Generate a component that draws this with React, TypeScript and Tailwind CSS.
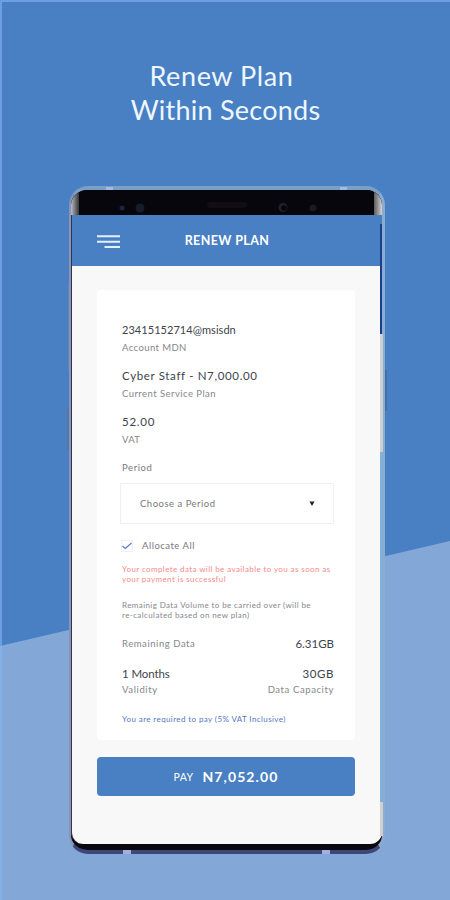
const details = [
  { value: "23415152714@msisdn", label: "Account MDN", valueClass: "text-[11px] tracking-[0.05px]", labelClass: "tracking-[0.4px]" },
  { value: "Cyber Staff - N7,000.00", label: "Current Service Plan", valueClass: "text-[11.5px] tracking-[0.65px]", labelClass: "tracking-[0.45px]" },
  { value: "52.00", label: "VAT", valueClass: "text-[11.5px] tracking-[0.75px]", labelClass: "tracking-[0.3px]" },
];

const MenuIcon = () => (
  <svg width="23" height="13" viewBox="0 0 23 13" stroke="#e4effb" strokeWidth="2">
    <path d="M0 1.2H23M0 6.7H23M7.5 12H23" />
  </svg>
);

const PhoneTop = () => (
  <div className="flex h-[25px] shrink-0 justify-between rounded-t-[12px] bg-[#07060c]">
    <div className="h-full w-[8px] rounded-tl-[12px] bg-gradient-to-r from-[#b9bdc4] to-[#38373b]" />
    <svg className="flex-1" height="25" viewBox="0 0 295 25" preserveAspectRatio="none">
      <circle cx="43" cy="18" r="2.5" fill="#182448" />
      <circle cx="61" cy="18" r="4.5" fill="#171c2c" />
      <rect x="128" y="12" width="40" height="6" rx="3" fill="#100e14" />
      <circle cx="204" cy="17.5" r="4.5" fill="#20212c" />
      <circle cx="205" cy="18" r="2.8" fill="#050508" />
      <circle cx="234" cy="18" r="3.5" fill="#1b1921" />
    </svg>
    <div className="h-full w-[8px] rounded-tr-[12px] bg-gradient-to-r from-[#5f5c5e] to-[#d4d4d1]" />
  </div>
);

const PlanCard = () => (
  <div className="h-[450px] rounded-[4px] bg-white pt-[31px] pr-[21px] pl-[25px] text-[#3d434c]">
    {details.map((item) => (
      <div key={item.label} className="mb-3 h-[34px]">
        <p className={`h-[17px] leading-[17px] whitespace-nowrap ${item.valueClass}`}>{item.value}</p>
        <p className={`h-[17px] pt-px text-[9.5px] leading-[17px] text-[#85878b] ${item.labelClass}`}>{item.label}</p>
      </div>
    ))}
    <p className="mt-[13px] text-[9.5px] leading-4 tracking-[0.6px] text-[#77797d]">Period</p>
    <div className="mt-[7px] -ml-[2px] flex h-[41px] w-[214px] items-center justify-between border border-[#f0f0f0] pr-[18px] pl-[19px]">
      <span className="pt-px text-[9.5px] tracking-[0.5px] text-[#77797d]">Choose a Period</span>
      <svg width="6" height="5" viewBox="0 0 6 5">
        <path d="M0.5 0.5H5.5L3 5Z" fill="#222" />
      </svg>
    </div>
    <div className="mt-4 -ml-px flex h-3 items-center gap-[9px]">
      <span className="flex h-3 w-3 items-center justify-center border border-[#edf0f8]">
        <svg width="10" height="8" viewBox="0 0 10 8" className="shrink-0" fill="none" stroke="#5d70d8" strokeWidth="1.1">
          <path d="M0.5 4L3.3 6.5L9.5 1" />
        </svg>
      </span>
      <span className="text-[9.5px] tracking-[0.5px] text-[#77797d]">Allocate All</span>
    </div>
    <p className="mt-3 text-[8px] leading-[10px] tracking-[0.4px] whitespace-nowrap text-[#f58b8b]">
      Your complete data will be available to you as soon as<br />your payment is successful
    </p>
    <p className="mt-4 text-[8px] leading-[10px] tracking-[0.4px] whitespace-nowrap text-[#85878b]">
      Remainig Data Volume to be carried over (will be<br />re-calculated based on new plan)
    </p>
    <div className="mt-4 flex h-4 items-center justify-between">
      <span className="text-[9.5px] tracking-[0.55px] text-[#85878b]">Remaining Data</span>
      <span className="text-[11.5px]">6.31GB</span>
    </div>
    <div className="mt-[14px] flex h-4 items-center justify-between text-[11.5px]">
      <span className="tracking-[-0.1px]">1 Months</span>
      <span className="tracking-[0.6px]">30GB</span>
    </div>
    <div className="flex h-4 items-center justify-between pt-px text-[9.5px] tracking-[0.6px] text-[#85878b]">
      <span>Validity</span>
      <span>Data Capacity</span>
    </div>
    <p className="mt-[13px] text-[8px] leading-4 tracking-[0.4px] text-[#5577bf]">You are required to pay (5% VAT Inclusive)</p>
  </div>
);

const Phone = () => (
  <div className="relative mx-auto mt-[59px] h-[668px] w-[316px]">
    {/* side keys */}
    <div className="absolute top-[98px] -left-px h-[86px] w-[2px] bg-[#6682ad]" />
    <div className="absolute top-[223px] -left-[2px] h-[41px] w-[3px] bg-[#56779f]" />
    <div className="absolute top-[184px] -right-[2px] h-[41px] w-[3px] bg-[#416fa9]" />

    <div className="relative flex h-full w-full flex-col overflow-hidden rounded-[19px] border-t-4 border-r-[3px] border-b-4 border-l-2 border-t-[#7ba0c5] border-r-[#8caad2] border-b-[#3f4779] border-l-[#8795b7] bg-[#0a0910]">
      <PhoneTop />
      <div className="flex h-[629px] shrink-0 flex-col overflow-hidden rounded-b-[12px] border-l border-[#34324e] bg-[#f8f8f8]">
        <div className="grid h-[51px] shrink-0 grid-cols-[60px_1fr_60px] items-center bg-[#4880c3] text-white">
          <div className="pt-px pl-[25px]">
            <MenuIcon />
          </div>
          <h2 className="pt-[2px] text-center text-[12.5px] font-bold tracking-[0.4px]">RENEW PLAN</h2>
        </div>
        <div className="pt-6 pr-[27px] pl-[25px]">
          <PlanCard />
          <button className="mt-[17px] flex h-[39px] w-full items-center justify-center gap-[9px] rounded-[4px] bg-[#4880c3] text-white">
            <span className="pt-[2px] text-[10.5px] tracking-[0.4px]">PAY</span>
            <span className="text-[14px] font-bold tracking-[1.1px]">N7,052.00</span>
          </button>
        </div>
      </div>
    </div>

    {/* right edge reflections and antenna bands */}
    <div className="absolute top-[38px] right-[3px] h-[110px] w-[2px] bg-[#173f8c]" />
    <div className="absolute top-[148px] right-[2px] h-[118px] w-[3px] bg-[#ccd0d0]" />
    <div className="absolute top-[266px] right-[3px] h-[350px] w-[2px] bg-[#7fb3db]" />
    <div className="absolute top-[616px] right-[2px] h-[34px] w-[3px] bg-[#d1d1cb]" />
    <div className="absolute top-[1px] left-[37px] h-[3px] w-[7px] bg-[#a3b8ee]" />
    <div className="absolute top-[1px] right-[38px] h-[3px] w-[7px] bg-[#9abce6]" />
    <div className="absolute bottom-0 left-[54px] h-[4px] w-[8px] bg-[#a3afe3]" />
    <div className="absolute right-[55px] bottom-0 h-[4px] w-[8px] bg-[#a3afe3]" />
  </div>
);

export default function App() {
  return (
    <main className="relative h-[900px] w-[450px] overflow-hidden bg-[#4880c3] font-['Lato',sans-serif]">
      <div className="absolute inset-0 bg-[#83a7d6] [clip-path:polygon(0_646px,450px_541px,450px_900px,0_900px)]" />
      <div className="absolute inset-0 border-t-2 border-l-2 border-[#86b4f2]/60" />
      <div className="relative pt-[59px] pl-[4px]">
        <h1 className="-ml-[3px] h-[68px] text-center text-[27px] leading-[34px] tracking-[0.25px] text-[#eef6ff]">
          <span className="-ml-2 tracking-[0.6px]">Renew Plan</span><br />Within Seconds
        </h1>
        <Phone />
      </div>
    </main>
  );
}
